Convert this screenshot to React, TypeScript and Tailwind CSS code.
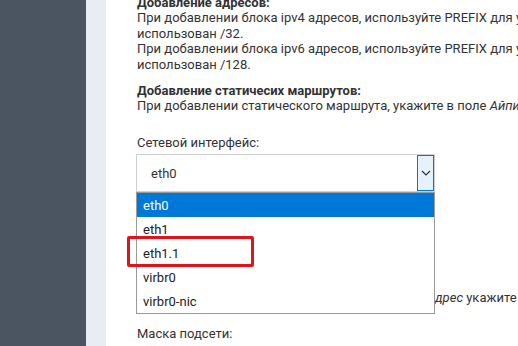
import React from 'react';

const options = ['eth0', 'eth1', 'eth1.1', 'virbr0', 'virbr0-nic'];

const Chevron: React.FC = () => (
  <svg width="10" height="6" viewBox="0 0 10 6" fill="none">
    <path d="M1 1l4 4 4-4" stroke="#333" strokeWidth="1.2" />
  </svg>
);

export default function App() {
  return (
    <div className="flex h-[346px] w-[518px] overflow-hidden bg-white text-[13px] text-[#333] font-['Roboto',sans-serif]">
      <aside className="w-[86px] shrink-0 bg-[#4a5561]" />
      <div className="w-[20px] shrink-0 bg-[#e8edf4]" />

      <main className="flex-1 overflow-hidden whitespace-nowrap pl-[30px] leading-[15.4px]">
        <div className="-mt-[5px] pl-px">
          <p className="font-bold">Добавление адресов:</p>
          <p>При добавлении блока ipv4 адресов, используйте PREFIX для указания маски</p>
          <p>использован /32.</p>
          <p>При добавлении блока ipv6 адресов, используйте PREFIX для указания маски</p>
          <p>использован /128.</p>

          <p className="mt-[11px] font-bold">Добавление статичесих маршрутов:</p>
          <p>
            При добавлении статического маршрута, укажите в поле <i>Айпи адрес</i> сеть назначения
          </p>

          <p className="mt-[21px]">Сетевой интерфейс:</p>
        </div>

        {/* select + opened list */}
        <div className="relative mt-[4px] w-[299px]">
          <div className="flex h-[38px] items-center justify-between border border-[#cfcfcf] bg-white">
            <span className="pl-[14px]">eth0</span>
            <span className="flex h-[36px] w-[17px] items-center justify-center border border-[#0078d7] bg-[#e5f1fb]">
              <Chevron />
            </span>
          </div>

          <ul className="absolute left-0 top-[38px] z-10 w-[299px] border border-[#9a9a9a] bg-white">
            {options.map((o, i) => (
              <li
                key={o}
                className={`flex h-[24px] items-center pl-[6px] ${
                  i === 0 ? 'bg-[#0078d7] text-white' : 'text-[#222]'
                }`}
              >
                {o}
              </li>
            ))}
          </ul>

          {/* annotation */}
          <div className="absolute left-[-9px] top-[82px] z-20 h-[31px] w-[127px] rounded-[2px] border-[3px] border-[#e0141b]" />
        </div>

        {/* line partly hidden by the open list */}
        <p className="mt-[98px] pl-px">
          <span className="inline-block w-[298px] text-right">
            Для шлюза в поле <i>А</i>
          </span>
          <i>дрес</i> укажите <span className="text-[#b4532a]">по умолчанию</span>
        </p>

        <p className="mt-[20px] pl-px">Маска подсети:</p>
      </main>
    </div>
  );
}
